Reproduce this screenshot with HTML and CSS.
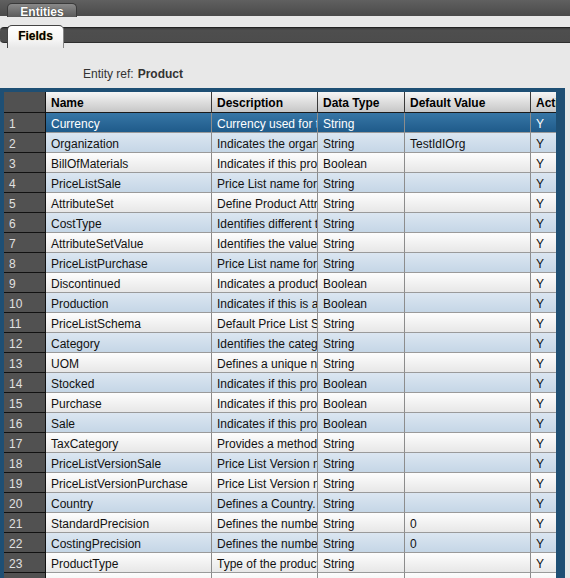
FILE: index.html
```html
<!DOCTYPE html>
<html>
<head>
<meta charset="utf-8">
<link rel="stylesheet" href="styles.css">
</head>
<body>
<div class="page">
  <div class="bar bar-top">
    <div class="tab tab-dark">Entities</div>
  </div>
  <div class="bar bar-sub">
    <div class="tab tab-light">Fields</div>
  </div>
  <div class="entity-ref">
    <span class="label">Entity ref:</span>
    <span class="value">Product</span>
  </div>
  <div class="panel">
    <div class="grid-wrap">
      <table class="grid">
        <colgroup>
          <col class="c-num"><col class="c-name"><col class="c-desc"><col class="c-type"><col class="c-def"><col class="c-act">
        </colgroup>
        <thead>
          <tr><th class="num"></th><th>Name</th><th>Description</th><th>Data Type</th><th>Default Value</th><th>Active</th></tr>
        </thead>
        <tbody>
          <tr class="sel"><td class="num">1</td><td>Currency</td><td>Currency used for this product</td><td>String</td><td></td><td>Y</td></tr>
          <tr class="alt"><td class="num">2</td><td>Organization</td><td>Indicates the organization</td><td>String</td><td>TestIdIOrg</td><td>Y</td></tr>
          <tr><td class="num">3</td><td>BillOfMaterials</td><td>Indicates if this product is a bill of materials</td><td>Boolean</td><td></td><td>Y</td></tr>
          <tr class="alt"><td class="num">4</td><td>PriceListSale</td><td>Price List name for sales</td><td>String</td><td></td><td>Y</td></tr>
          <tr><td class="num">5</td><td>AttributeSet</td><td>Define Product Attribute Set</td><td>String</td><td></td><td>Y</td></tr>
          <tr class="alt"><td class="num">6</td><td>CostType</td><td>Identifies different types of cost</td><td>String</td><td></td><td>Y</td></tr>
          <tr><td class="num">7</td><td>AttributeSetValue</td><td>Identifies the value of the attribute set</td><td>String</td><td></td><td>Y</td></tr>
          <tr class="alt"><td class="num">8</td><td>PriceListPurchase</td><td>Price List name for purchases</td><td>String</td><td></td><td>Y</td></tr>
          <tr><td class="num">9</td><td>Discontinued</td><td>Indicates a product is discontinued</td><td>Boolean</td><td></td><td>Y</td></tr>
          <tr class="alt"><td class="num">10</td><td>Production</td><td>Indicates if this is a production item</td><td>Boolean</td><td></td><td>Y</td></tr>
          <tr><td class="num">11</td><td>PriceListSchema</td><td>Default Price List Schema</td><td>String</td><td></td><td>Y</td></tr>
          <tr class="alt"><td class="num">12</td><td>Category</td><td>Identifies the category</td><td>String</td><td></td><td>Y</td></tr>
          <tr><td class="num">13</td><td>UOM</td><td>Defines a unique non monetary unit</td><td>String</td><td></td><td>Y</td></tr>
          <tr class="alt"><td class="num">14</td><td>Stocked</td><td>Indicates if this product is stocked</td><td>Boolean</td><td></td><td>Y</td></tr>
          <tr><td class="num">15</td><td>Purchase</td><td>Indicates if this product is purchased</td><td>Boolean</td><td></td><td>Y</td></tr>
          <tr class="alt"><td class="num">16</td><td>Sale</td><td>Indicates if this product is sold</td><td>Boolean</td><td></td><td>Y</td></tr>
          <tr><td class="num">17</td><td>TaxCategory</td><td>Provides a method of grouping taxes</td><td>String</td><td></td><td>Y</td></tr>
          <tr class="alt"><td class="num">18</td><td>PriceListVersionSale</td><td>Price List Version name for sales</td><td>String</td><td></td><td>Y</td></tr>
          <tr><td class="num">19</td><td>PriceListVersionPurchase</td><td>Price List Version name for purchases</td><td>String</td><td></td><td>Y</td></tr>
          <tr class="alt"><td class="num">20</td><td>Country</td><td>Defines a Country.</td><td>String</td><td></td><td>Y</td></tr>
          <tr><td class="num">21</td><td>StandardPrecision</td><td>Defines the number of decimals</td><td>String</td><td>0</td><td>Y</td></tr>
          <tr class="alt"><td class="num">22</td><td>CostingPrecision</td><td>Defines the number of costing decimals</td><td>String</td><td>0</td><td>Y</td></tr>
          <tr><td class="num">23</td><td>ProductType</td><td>Type of the product</td><td>String</td><td></td><td>Y</td></tr>
          <tr><td class="num">24</td><td>Weight</td><td>Weight of the product</td><td>Number</td><td></td><td>Y</td></tr>
        </tbody>
      </table>
    </div>
  </div>
</div>
</body>
</html>
```

FILE: styles.css
```css
html, body {
  margin: 0;
  padding: 0;
}
body {
  background: #e8e8e8;
  font-family: "Liberation Sans", Arial, sans-serif;
  font-size: 12px;
  color: #000;
}
.page {
  width: 570px;
  height: 578px;
  overflow: hidden;
  display: flex;
  flex-direction: column;
}
.bar {
  display: flex;
  align-items: flex-start;
  padding-left: 7px;
  flex: none;
}
.bar-top {
  height: 16px;
  background: linear-gradient(#606060, #4a4a4a);
}
.bar-sub {
  height: 16px;
  margin-top: 11px;
  box-sizing: border-box;
  border-top: 1px solid #222;
  border-bottom: 1px solid #2e2e2e;
  border-radius: 4px 0 0 4px;
  background: linear-gradient(#3c3c3c 0, #4e4e4e 2px, #4c4c4c 100%);
}
.tab {
  box-sizing: border-box;
  font-weight: bold;
  font-size: 12px;
  text-align: center;
  border-radius: 5px 5px 0 0;
}
.tab-dark {
  width: 70px;
  height: 14px;
  margin-top: 3px;
  padding-top: 2px;
  line-height: 13px;
  color: #fff;
  background: linear-gradient(#8a8a8a, #5a5a5a);
  border: 1px solid #3a3a3a;
  border-bottom: none;
  text-shadow: 0 0 1px #222;
}
.tab-light {
  width: 57px;
  height: 23px;
  margin-top: -3px;
  padding-top: 3px;
  line-height: 14px;
  color: #000;
  background: linear-gradient(#ffffff 0, #f6f6f6 60%, #e8e8e8 100%);
  border: 1px solid #444;
  border-bottom: none;
  border-right-color: #888;
  text-shadow: 0 0 1px #c89a3a;
}
.entity-ref {
  flex: none;
  height: 45px;
  box-sizing: border-box;
  padding: 24px 0 0 83px;
  line-height: 14px;
  color: #333;
  display: flex;
  gap: 4px;
}
.entity-ref .value {
  font-weight: bold;
}
.panel {
  flex: 1;
  width: 565px;
  box-sizing: border-box;
  background: #1e4f74;
  padding: 4px 9px 0 4px;
  overflow: hidden;
}
.grid-wrap {
  width: 552px;
  height: 100%;
  overflow: hidden;
  background: #e8e8e8;
}
.grid {
  border-collapse: separate;
  border-spacing: 0;
  table-layout: fixed;
  width: 600px;
}
.c-num { width: 42px; }
.c-name { width: 166px; }
.c-desc { width: 106px; }
.c-type { width: 87px; }
.c-def { width: 126px; }
.c-act { width: 73px; }
.grid th, .grid td {
  box-sizing: border-box;
  white-space: nowrap;
  overflow: hidden;
  text-align: left;
  padding: 2px 0 0 5px;
  line-height: 14px;
}
.grid th {
  height: 21px;
  font-weight: bold;
  background: linear-gradient(#f6f6f6, #c6c6c6);
  border-right: 1px solid #3a3a3a;
  border-bottom: 1px solid #1a1a1a;
}
.grid td {
  height: 20px;
  background: linear-gradient(#fdfdfd, #e7e7e7);
  border-right: 1px solid #8c8c8c;
  border-bottom: 1px solid #9a9a9a;
  color: #111;
}
.grid tr.alt td {
  background: linear-gradient(#dbe6f1, #c5d6e6);
}
.grid tr.sel td {
  background: linear-gradient(#3776a6, #1f5b8a);
  color: #fff;
}
.grid th.num, .grid td.num,
.grid tr.alt td.num, .grid tr.sel td.num {
  background: #515151;
  color: #e0e0e0;
  border-right: 1px solid #111;
  border-bottom: 1px solid #111;
}
```
